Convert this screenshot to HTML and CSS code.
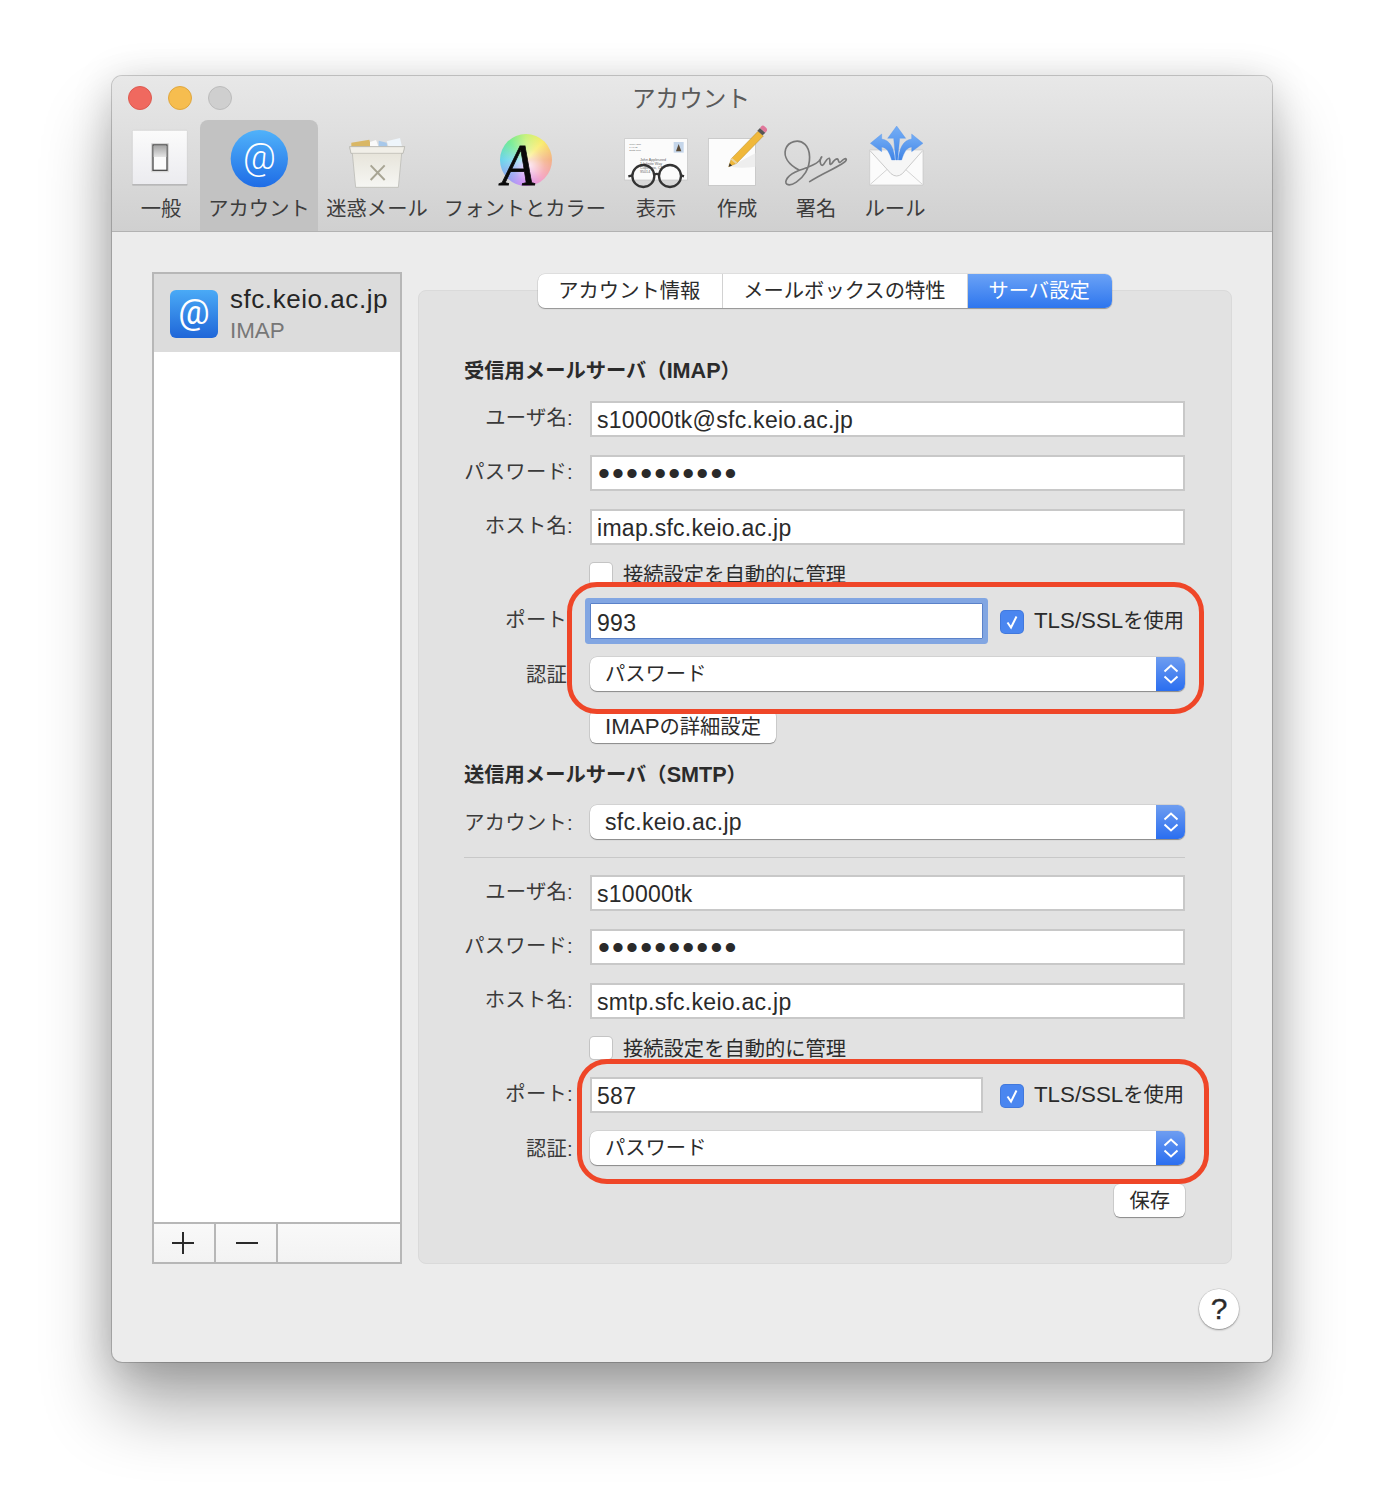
FILE: index.html
```html
<!DOCTYPE html>
<html lang="ja">
<head>
<meta charset="utf-8">
<title>アカウント</title>
<link rel="stylesheet" href="styles.css">
</head>
<body>
<div class="window">
  <header class="header">
    <div class="titlebar">
      <div class="lights"><span class="light red"></span><span class="light yellow"></span><span class="light off"></span></div>
      <div class="title">アカウント</div>
    </div>
    <nav class="toolbar">
      <div class="tool">
        <svg class="slot" viewBox="42 144 210 198">
          <defs>
            <linearGradient id="sw" x1="0" y1="0" x2="0" y2="1"><stop offset="0" stop-color="#fbfbfb"/><stop offset="1" stop-color="#ebebef"/></linearGradient>
            <linearGradient id="sw2" x1="0" y1="0" x2="0" y2="1"><stop offset="0" stop-color="#a6a6a6"/><stop offset="1" stop-color="#e4e4e4"/></linearGradient>
          </defs>
          <rect x="61" y="163" width="165" height="165" rx="3" fill="url(#sw)" stroke="#c4c4c4" stroke-width="1.5"/>
          <rect x="61" y="325" width="165" height="3" fill="#a0a0a0"/>
          <rect x="117" y="201" width="54" height="88" rx="4" fill="#d6d6d6"/>
          <rect x="121" y="205" width="46" height="80" rx="1" fill="#4d4d4d"/>
          <rect x="125" y="209" width="38" height="72" fill="#fbfbfb"/>
          <rect x="125" y="209" width="38" height="34" fill="url(#sw2)"/>
        </svg>
        <span class="tool-label">一般</span>
      </div>
      <div class="tool is-active">
        <svg class="slot" viewBox="336 144 210 198">
          <defs><linearGradient id="at" x1="0" y1="0" x2="0" y2="1"><stop offset="0" stop-color="#50b2fa"/><stop offset="1" stop-color="#1e6ce6"/></linearGradient></defs>
          <circle cx="442" cy="248" r="86" fill="url(#at)"/>
          <text x="442" y="278" class="at-glyph">@</text>
        </svg>
        <span class="tool-label">アカウント</span>
      </div>
      <div class="tool">
        <svg class="slot" viewBox="690 144 210 198">
          <defs><linearGradient id="bin" x1="0" y1="0" x2="0" y2="1"><stop offset="0" stop-color="#e4e1d6"/><stop offset="1" stop-color="#f6f6f3"/></linearGradient></defs>
          <path d="M718 200l54-9 6 22h-60z" fill="#d9b765"/>
          <path d="M774 198l18-6 8 20h-26z" fill="#fafafa"/>
          <path d="M800 194l24 6 2 12h-26z" fill="#a7c8ea"/>
          <path d="M824 196l40-10 6 26h-40z" fill="#eef5fb"/>
          <path d="M713 212h165l-5 20h-4l-10 102H731l-10-102h-4z" fill="url(#bin)" stroke="#b4b4ae" stroke-width="2"/>
          <path d="M713 212h165l-5 20H717z" fill="#f1efe8" stroke="#b4b4ae" stroke-width="2"/>
          <path d="M776 268l42 44M818 268l-42 44" stroke="#a8a594" stroke-width="6" fill="none"/>
        </svg>
        <span class="tool-label">迷惑メール</span>
      </div>
      <div class="tool">
        <div class="slot wheel-slot"><div class="wheel"></div><span class="wheel-a">A</span></div>
        <span class="tool-label">フォントとカラー</span>
      </div>
      <div class="tool">
        <svg class="slot" viewBox="303 144 210 198">
          <rect x="314" y="188" width="188" height="124" fill="#fbfbfb" stroke="#c4c4c4" stroke-width="2"/>
          <rect x="461" y="198" width="30" height="32" fill="#c5d6ea"/>
          <path d="M468 226l8-22 8 22z" fill="#5a4a36"/>
          <text x="328" y="208" class="env-text">Jenny Cafe</text>
          <text x="328" y="216" class="env-text">1 Hill St</text>
          <text x="328" y="224" class="env-text">Santa Cruz</text>
          <text x="360" y="254" class="env-text big">John Appleseed</text>
          <text x="360" y="266" class="env-text big">1 Infinite Way</text>
          <text x="360" y="278" class="env-text big">Cupertino, CA</text>
          <text x="360" y="290" class="env-text big">95014</text>
          <circle cx="370" cy="300" r="33" fill="none" stroke="#333" stroke-width="7"/>
          <circle cx="450" cy="300" r="33" fill="none" stroke="#333" stroke-width="7"/>
          <path d="M403 296q7-5 14 0M337 298l-12 3M483 298l9 3" fill="none" stroke="#333" stroke-width="7"/>
        </svg>
        <span class="tool-label">表示</span>
      </div>
      <div class="tool">
        <svg class="slot" viewBox="546 144 210 198">
          <rect x="565" y="188" width="141" height="140" fill="#fcfcfc" stroke="#bdbdbd" stroke-width="2"/>
          <path d="M630 272l76-40v40q-40 6-76 0z" fill="#eeeeee"/>
          <path d="M626 272l8-24 80-82 16 14-80 82z" fill="#f0b83a" stroke="#b78a26" stroke-width="1.5"/>
          <path d="M626 272l3-10 7 7z" fill="#333"/>
          <path d="M634 248l16 14" stroke="#e8d3a0" stroke-width="6"/>
          <path d="M712 164l16 14 8-8-16-14z" fill="#555"/>
          <path d="M720 156l16 14 5-6q2-6-6-12-7-6-11-1z" fill="#e0769a"/>
        </svg>
        <span class="tool-label">作成</span>
      </div>
      <div class="tool">
        <svg class="slot" viewBox="783 144 210 198">
          <g transform="translate(765 147)">
            <path d="M72 135C40 118 25 95 32 72 40 50 70 40 90 58 108 75 108 115 92 142 78 165 50 185 36 178 25 170 40 148 70 137 95 128 118 122 132 108 140 98 142 92 138 98 132 110 138 128 146 118 152 108 158 98 163 100 168 105 160 125 170 116 176 108 182 100 188 102 192 108 190 118 200 108 206 102 214 98 214 104 212 118 150 140 104 170" fill="none" stroke="#787878" stroke-width="5" stroke-linecap="round" stroke-linejoin="round"/>
          </g>
        </svg>
        <span class="tool-label">署名</span>
      </div>
      <div class="tool">
        <svg class="slot" viewBox="1020 144 210 198">
          <defs><linearGradient id="ar" x1="0" y1="0" x2="0" y2="1"><stop offset="0" stop-color="#75aef6"/><stop offset="1" stop-color="#3f84e6"/></linearGradient></defs>
          <g transform="translate(765 147)">
            <path d="M284 75h160v105h-160z" fill="#fbfbfb" stroke="#c4c4c4" stroke-width="2"/>
            <path d="M286 178l54-48M442 178l-54-48" stroke="#d4d4d4" stroke-width="3" fill="none"/>
            <path d="M286 78l62 68q17 14 34 0l60-68" fill="#f6f6f6" stroke="#cacaca" stroke-width="3"/>
            <path d="M286 55L320 27V42C345 45 358 70 360 105H350C342 80 335 68 320 66V80Z" fill="url(#ar)" stroke="#4f8fe6" stroke-width="1"/>
            <path d="M444 55L410 27V42C385 45 372 70 370 105H380C388 80 395 68 410 66V80Z" fill="url(#ar)" stroke="#4f8fe6" stroke-width="1"/>
            <path d="M365 3L392 40H374L368 105H362L356 40H338Z" fill="url(#ar)" stroke="#4f8fe6" stroke-width="1"/>
          </g>
        </svg>
        <span class="tool-label">ルール</span>
      </div>
    </nav>
  </header>

  <main class="main">
    <aside class="sidebar">
      <div class="account">
        <svg class="account-icon" viewBox="0 0 48 48">
          <defs><linearGradient id="at2" x1="0" y1="0" x2="0" y2="1"><stop offset="0" stop-color="#4aaaf6"/><stop offset="1" stop-color="#1f66d8"/></linearGradient></defs>
          <rect width="48" height="48" rx="6" fill="url(#at2)"/>
          <text x="24" y="34" class="at-small">@</text>
        </svg>
        <div class="account-text">
          <div class="account-name">sfc.keio.ac.jp</div>
          <div class="account-type">IMAP</div>
        </div>
      </div>
      <div class="sidebar-list"></div>
      <div class="sidebar-bar">
        <div class="bar-btn plus">
          <svg width="24" height="24" viewBox="0 0 24 24"><path d="M1 12h22M12 1v22" stroke="#2a2a2a" stroke-width="2"/></svg>
        </div>
        <div class="bar-btn minus">
          <svg width="24" height="24" viewBox="0 0 24 24"><path d="M1 12h22" stroke="#2a2a2a" stroke-width="2"/></svg>
        </div>
        <div class="bar-rest"></div>
      </div>
    </aside>

    <section class="panel">
      <div class="tabs">
        <div class="tab">アカウント情報</div>
        <div class="tab">メールボックスの特性</div>
        <div class="tab is-active">サーバ設定</div>
      </div>
      <div class="form">
        <h2 class="heading first">受信用メールサーバ（<span class="lat">IMAP</span>）</h2>
        <div class="row first-field"><label class="label">ユーザ名:</label><div class="field">s10000tk@sfc.keio.ac.jp</div></div>
        <div class="row"><label class="label">パスワード:</label><div class="field dots">••••••••••</div></div>
        <div class="row"><label class="label">ホスト名:</label><div class="field">imap.sfc.keio.ac.jp</div></div>
        <div class="row tight"><span></span><div class="check-line"><span class="check"></span><span class="check-text">接続設定を自動的に管理</span></div></div>
        <div class="callout-group">
          <div class="row"><label class="label">ポート:</label><div class="port-line"><div class="field port focused">993</div><div class="check-line"><span class="check on"><svg width="22" height="22" viewBox="0 0 22 22"><path d="M6.500 11.500l3.500 5 5.500-11" fill="none" stroke="#fff" stroke-width="2"/></svg></span><span class="check-text"><span class="lat">TLS/SSL</span>を使用</span></div></div></div>
          <div class="row select-row"><label class="label">認証:</label><div class="select"><span class="select-text">パスワード</span><span class="select-arrow"><svg width="16" height="24" viewBox="0 0 16 24"><path d="M1.500 9.500L8 3.500 14.500 9.500M1.500 14.500L8 20.500 14.500 14.500" fill="none" stroke="#fff" stroke-width="2"/></svg></span></div></div>
          <div class="callout callout-imap"></div>
        </div>
        <div class="row"><span></span><div class="btn-line"><div class="btn"><span class="lat">IMAP</span>の詳細設定</div></div></div>

        <h2 class="heading">送信用メールサーバ（<span class="lat">SMTP</span>）</h2>
        <div class="row select-row"><label class="label">アカウント:</label><div class="select"><span class="select-text latin">sfc.keio.ac.jp</span><span class="select-arrow"><svg width="16" height="24" viewBox="0 0 16 24"><path d="M1.500 9.500L8 3.500 14.500 9.500M1.500 14.500L8 20.500 14.500 14.500" fill="none" stroke="#fff" stroke-width="2"/></svg></span></div></div>
        <div class="rule"></div>
        <div class="row tight"><label class="label">ユーザ名:</label><div class="field">s10000tk</div></div>
        <div class="row"><label class="label">パスワード:</label><div class="field dots">••••••••••</div></div>
        <div class="row"><label class="label">ホスト名:</label><div class="field">smtp.sfc.keio.ac.jp</div></div>
        <div class="row tight"><span></span><div class="check-line"><span class="check"></span><span class="check-text">接続設定を自動的に管理</span></div></div>
        <div class="callout-group">
          <div class="row"><label class="label">ポート:</label><div class="port-line"><div class="field port">587</div><div class="check-line"><span class="check on"><svg width="22" height="22" viewBox="0 0 22 22"><path d="M6.500 11.500l3.500 5 5.500-11" fill="none" stroke="#fff" stroke-width="2"/></svg></span><span class="check-text"><span class="lat">TLS/SSL</span>を使用</span></div></div></div>
          <div class="row select-row"><label class="label">認証:</label><div class="select"><span class="select-text">パスワード</span><span class="select-arrow"><svg width="16" height="24" viewBox="0 0 16 24"><path d="M1.500 9.500L8 3.500 14.500 9.500M1.500 14.500L8 20.500 14.500 14.500" fill="none" stroke="#fff" stroke-width="2"/></svg></span></div></div>
          <div class="callout callout-smtp"></div>
        </div>
        <div class="save-line"><div class="btn">保存</div></div>
      </div>
    </section>
  </main>

  <footer class="footer"><div class="help">?</div></footer>
</div>
</body>
</html>
```

FILE: styles.css
```css
* { box-sizing: border-box; }
html, body { margin: 0; padding: 0; background: #fff; }
body {
  height: 1510px;
  padding: 76px 112px 0;
  overflow: hidden;
  font-family: "Liberation Sans", "Noto Sans CJK JP", sans-serif;
  color: #2b2b2b;
  font-size: 20.3px;
  line-height: 24px;
}
.lat { font-size: 22.3px; }
.window {
  width: 1160px;
  height: 1286px;
  display: flex;
  flex-direction: column;
  background: #ececec;
  border-radius: 10px;
  box-shadow: 0 0 0 1px rgba(0,0,0,.18), 0 46px 70px rgba(0,0,0,.32), 0 6px 40px rgba(0,0,0,.18);
}
.header {
  height: 156px;
  flex: none;
  background: linear-gradient(#e8e8e8, #d0d0d0);
  border-bottom: 1px solid #b2b2b2;
  border-radius: 10px 10px 0 0;
}
.titlebar { height: 44px; position: relative; display: flex; align-items: center; justify-content: center; }
.title { font-size: 23.6px; color: #5a5a5a; line-height: 30px; padding-top: 2px; margin-left: -2px; }
.lights { position: absolute; left: 16px; top: 10px; display: flex; gap: 16px; }
.light { width: 24px; height: 24px; border-radius: 50%; border: 1px solid; }
.light.red { background: #f0695f; border-color: #dd5a50; }
.light.yellow { background: #f6bd4f; border-color: #e0a73e; }
.light.off { background: #cfcfcf; border-color: #bcbcbc; }

.toolbar { display: grid; grid-template-columns: 78px 118px 118px 178px 84px 78px 80px 78px; padding-left: 10px; height: 111px; }
.tool { display: flex; flex-direction: column; align-items: center; padding-top: 4px; border-radius: 8px 8px 0 0; }
.tool.is-active { background: #c2c2c2; }
.slot { display: block; width: 70px; height: 66px; flex: none; overflow: visible; }
.tool-label { margin-top: 7px; white-space: nowrap; color: #3c3c3c; line-height: 24px; }
.at-glyph { font: 300 108px "Roboto", "Liberation Sans", sans-serif; fill: #fff; text-anchor: middle; }
.at-small { font: 400 35px "Roboto", "Liberation Sans", sans-serif; fill: #fff; text-anchor: middle; }
.env-text { font: 400 7px "Liberation Sans", sans-serif; fill: #666; }
.env-text.big { font-size: 11px; }
.wheel-slot { position: relative; }
.wheel {
  position: absolute; left: 10px; top: 10px; width: 52px; height: 52px; border-radius: 50%;
  background:
    radial-gradient(circle at 55% 60%, rgba(255,255,255,.85) 0, rgba(255,255,255,.35) 38%, rgba(255,255,255,0) 90%),
    conic-gradient(#c0f068, #f8e850 12%, #f09a60 25%, #f080a8 38%, #cc60f0 50%, #7888f0 62%, #50cce8 75%, #60e888 88%, #c0f068);
}
.wheel-a {
  position: absolute; left: 8px; top: 10px;
  font: italic 400 60px/62px "Liberation Serif", serif; color: #0a0a0a;
  -webkit-text-stroke: .8px #0a0a0a;
  transform: scaleX(.9);
  transform-origin: 100% 50%;
}

.main { display: flex; padding: 40px 40px 0; gap: 16px; flex: none; }
.sidebar { width: 250px; height: 992px; border: 2px solid #b7b7b7; background: #fff; display: flex; flex-direction: column; }
.account { height: 78px; background: #dcdcdc; display: flex; align-items: flex-start; padding: 16px 0 0 16px; gap: 12px; flex: none; }
.account-icon { width: 48px; height: 48px; flex: none; }
.account-name { font-size: 26px; letter-spacing: .55px; line-height: 28px; margin-top: -5px; color: #262626; white-space: nowrap; }
.account-type { font-size: 22.4px; line-height: 26px; margin-top: 5px; color: #777; }
.sidebar-list { flex: 1; }
.sidebar-bar { height: 40px; border-top: 2px solid #b7b7b7; display: flex; background: linear-gradient(#f9f9f9, #f3f3f3); flex: none; }
.bar-btn { width: 62px; border-right: 2px solid #b7b7b7; display: flex; align-items: center; justify-content: center; }
.bar-btn.plus { padding-right: 2px; }
.bar-btn.minus { padding-left: 2px; }
.bar-rest { flex: 1; }

.panel { width: 814px; height: 974px; margin-top: 18px; background: #e2e2e2; border: 1px solid #dadada; border-radius: 8px; flex: none; }
.tabs {
  width: max-content; margin: -17px auto 0; height: 34px; display: flex;
  background: #fff; border-radius: 7px; box-shadow: 0 1px 1px rgba(0,0,0,.3), 0 0 0 .5px rgba(0,0,0,.12);
}
.tab { padding: 0 22px 0 20px; line-height: 34px; border-right: 1px solid #d2d2d2; white-space: nowrap; }
.tab.is-active { background: linear-gradient(#6aa2f6, #2e76ee); color: #fff; border: 0; border-radius: 0 7px 7px 0; }

.form { padding: 50px 46px 0 45px; display: flex; flex-direction: column; gap: 19px; }
.heading { margin: 0; font-size: 20.3px; height: 24px; line-height: 26px; font-weight: 700; color: #2b2b2b; }
.heading .lat { font-size: 21.6px; }
.row { display: grid; grid-template-columns: 109px 595px; column-gap: 17px; align-items: center; }
.first-field { margin-top: 1px; }
.tight { margin-top: -1px; }
.label { text-align: right; white-space: nowrap; color: #3a3a3a; line-height: 24px; padding-bottom: 3px; letter-spacing: .3px; }
.select-row .label { padding: 1px 0 0; }
.field {
  height: 36px; margin-top: -1px; background: #fff; border: 2px solid #c8c8c8; padding: 0 5px;
  font-size: 23px; letter-spacing: .28px; line-height: 35px; color: #2a2a2a; white-space: nowrap;
}
.dots { font-size: 34px; letter-spacing: 2.15px; line-height: 33px; padding-left: 6px; }
.port-line { display: flex; align-items: center; }
.port { width: 393px; flex: none; margin-right: 18px; }
.focused { border: 1px solid #5b82c9; padding: 0 6px; line-height: 39px; box-shadow: 0 0 0 5px #82a6e2; border-radius: 1px; }
.check-line { display: flex; align-items: center; gap: 11px; white-space: nowrap; height: 22px; }
.check-text { padding-top: 2px; }
.port-line .check-text { padding: 0 0 2px; }
.check { width: 22px; height: 22px; flex: none; background: #fff; border-radius: 4px; box-shadow: 0 0 0 1px #c4c4c4, 0 1px 1px rgba(0,0,0,.15); display: block; }
.check.on { background: #4a86f0; box-shadow: 0 0 0 1px #4178dc; }
.check svg { display: block; }
.callout-group { position: relative; display: flex; flex-direction: column; gap: 18px; }
.select {
  height: 34px; background: #fff; border-radius: 7px; display: flex; align-items: center; justify-content: space-between;
  box-shadow: 0 1px 1px rgba(0,0,0,.35), 0 0 0 .5px rgba(0,0,0,.14); overflow: hidden;
}
.select-text { padding-left: 15px; }
.select-text.latin { font-size: 23px; letter-spacing: .28px; }
.select-arrow { width: 29px; height: 34px; background: linear-gradient(#6e9df0, #2a6ef0); display: flex; align-items: center; justify-content: center; flex: none; }
.callout { position: absolute; border: 5px solid #ef4628; border-radius: 30px; pointer-events: none; }
.callout-imap { top: -22px; bottom: -23px; left: 103px; right: -19px; }
.callout-smtp { top: -19px; bottom: -19px; left: 113px; right: -24px; }
.btn-line { display: flex; }
.btn {
  height: 33px; padding: 0 15px; background: #fff; border-radius: 6px; line-height: 34px; white-space: nowrap;
  box-shadow: 0 1px 1px rgba(0,0,0,.35), 0 0 0 .5px rgba(0,0,0,.14);
}
.rule { height: 1px; background: #c8c8c8; margin-top: -1px; width: 721px; }
.save-line { display: flex; justify-content: flex-end; width: 721px; }

.footer { flex: 1; display: flex; justify-content: flex-end; align-items: flex-start; padding: 25px 33px 0 0; }
.help {
  width: 40px; height: 40px; border-radius: 50%; background: #fff; text-align: center;
  font-size: 30px; line-height: 40px; color: #2b2b2b; -webkit-text-stroke: .3px #2b2b2b;
  box-shadow: 0 1px 2px rgba(0,0,0,.35), 0 0 0 .5px rgba(0,0,0,.15);
}
```
